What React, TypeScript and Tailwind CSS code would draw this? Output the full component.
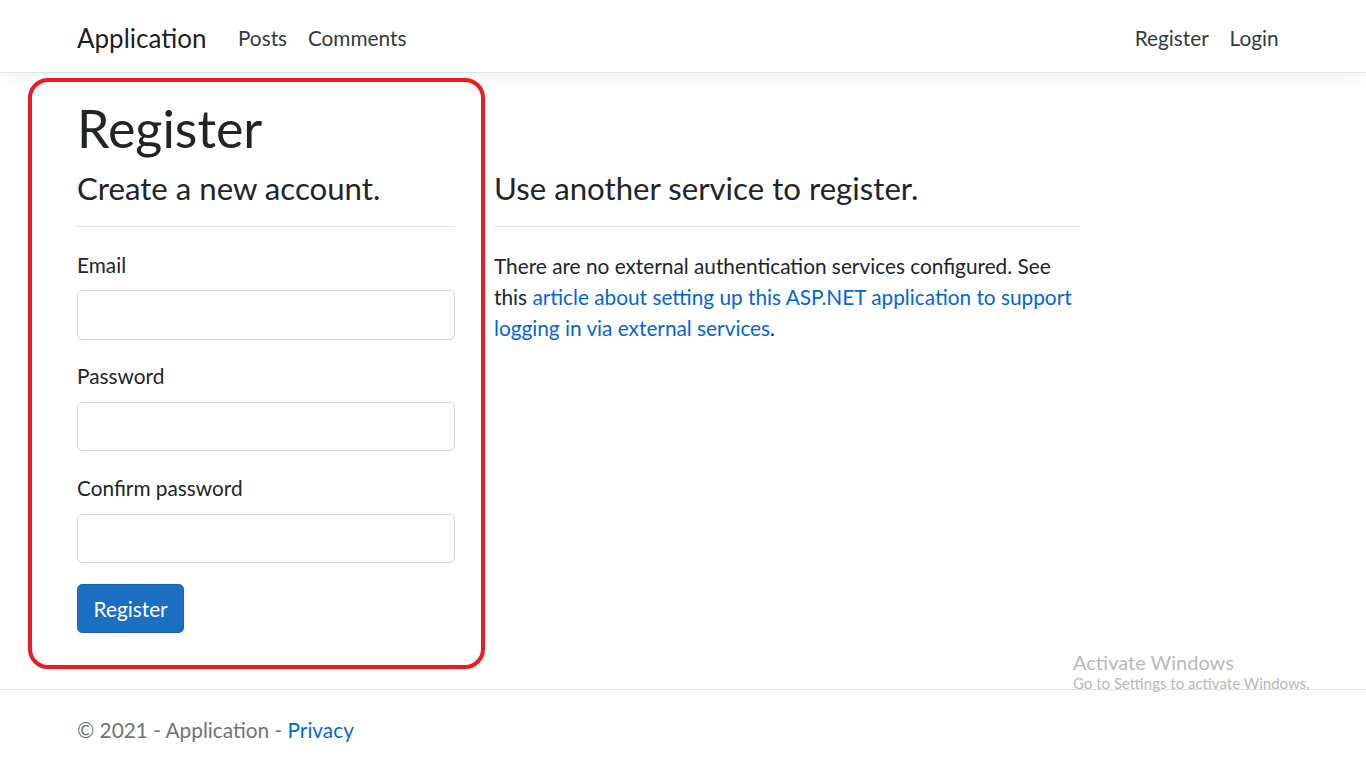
import React from "react";

export default function App() {
  return (
    <div className="relative flex h-[768px] flex-col overflow-hidden bg-white text-[#212529] font-['Lato',sans-serif]">
      {/* Navbar */}
      <header className="h-[73px] shrink-0 border-b border-[#dee2e6] bg-white shadow-[0_5px_16px_rgba(0,0,0,0.05)]">
        <div className="mx-auto flex h-full w-[1212px] items-center pt-[4px]">
          <a className="mr-[21px] text-[26px] leading-none text-black/90">Application</a>
          <a className="px-[10.4px] text-[20.8px] text-[#343a40]">Posts</a>
          <a className="px-[10.4px] text-[20.8px] text-[#343a40]">Comments</a>
          <div className="ml-auto flex">
            <a className="px-[10.4px] text-[20.8px] text-[#343a40]">Register</a>
            <a className="px-[10.4px] text-[20.8px] text-[#343a40]">Login</a>
          </div>
        </div>
      </header>

      {/* Main */}
      <main className="flex-1 pt-[23.8px]">
        <div className="mx-auto w-[1212px]">
          <h1 className="mb-[10.4px] text-[52px] leading-[1.2]">Register</h1>
          <div className="grid grid-cols-[378px_587px] gap-x-[39px]">
            <form>
              <h4 className="text-[31.2px] leading-[1.2]">Create a new account.</h4>
              <hr className="mt-[19px] mb-[21.6px] border-black/10" />
              {["Email", "Password", "Confirm password"].map((l) => (
                <div key={l} className="mb-[20.8px]">
                  <label className="mb-[10.4px] block text-[20.8px] leading-[1.5]">{l}</label>
                  <input className="block h-[49.4px] w-full rounded-[5.2px] border border-[#ced4da] bg-white" />
                </div>
              ))}
              <button
                type="button"
                className="h-[49px] rounded-[5.2px] border border-[#1861ac] bg-[#1b6ec2] px-[15.6px] text-[20.8px] leading-[1.5] text-white"
              >
                Register
              </button>
            </form>
            <section>
              <h4 className="text-[31.2px] leading-[1.2]">Use another service to register.</h4>
              <hr className="mt-[19px] mb-[23px] border-black/10" />
              <p className="text-[20.8px] leading-[1.5]">
                There are no external authentication services configured. See this{" "}
                <a className="text-[#0366d6]">article about setting up this ASP.NET application to support logging in via external services</a>.
              </p>
            </section>
          </div>
        </div>
      </main>

      {/* Footer */}
      <footer className="h-[79px] shrink-0 border-t border-[#dee2e6]">
        <div className="mx-auto flex h-full w-[1212px] items-center whitespace-nowrap pt-[2px] text-[20.8px] text-[#6c757d]">
          <span>
            © 2021 - Application - <a className="text-[#0366d6]">Privacy</a>
          </span>
        </div>
      </footer>

      {/* Annotation */}
      <div className="pointer-events-none absolute left-[28px] top-[78px] h-[591px] w-[457px] rounded-[20px] border-[4px] border-[#ea1c24]" />

      {/* Watermark */}
      <div className="pointer-events-none absolute left-[1073px] top-[650px] text-[#b9b9b9]">
        <div className="text-[20px] leading-[24px]">Activate Windows</div>
        <div className="text-[15px] leading-[18px]">Go to Settings to activate Windows.</div>
      </div>
    </div>
  );
}
